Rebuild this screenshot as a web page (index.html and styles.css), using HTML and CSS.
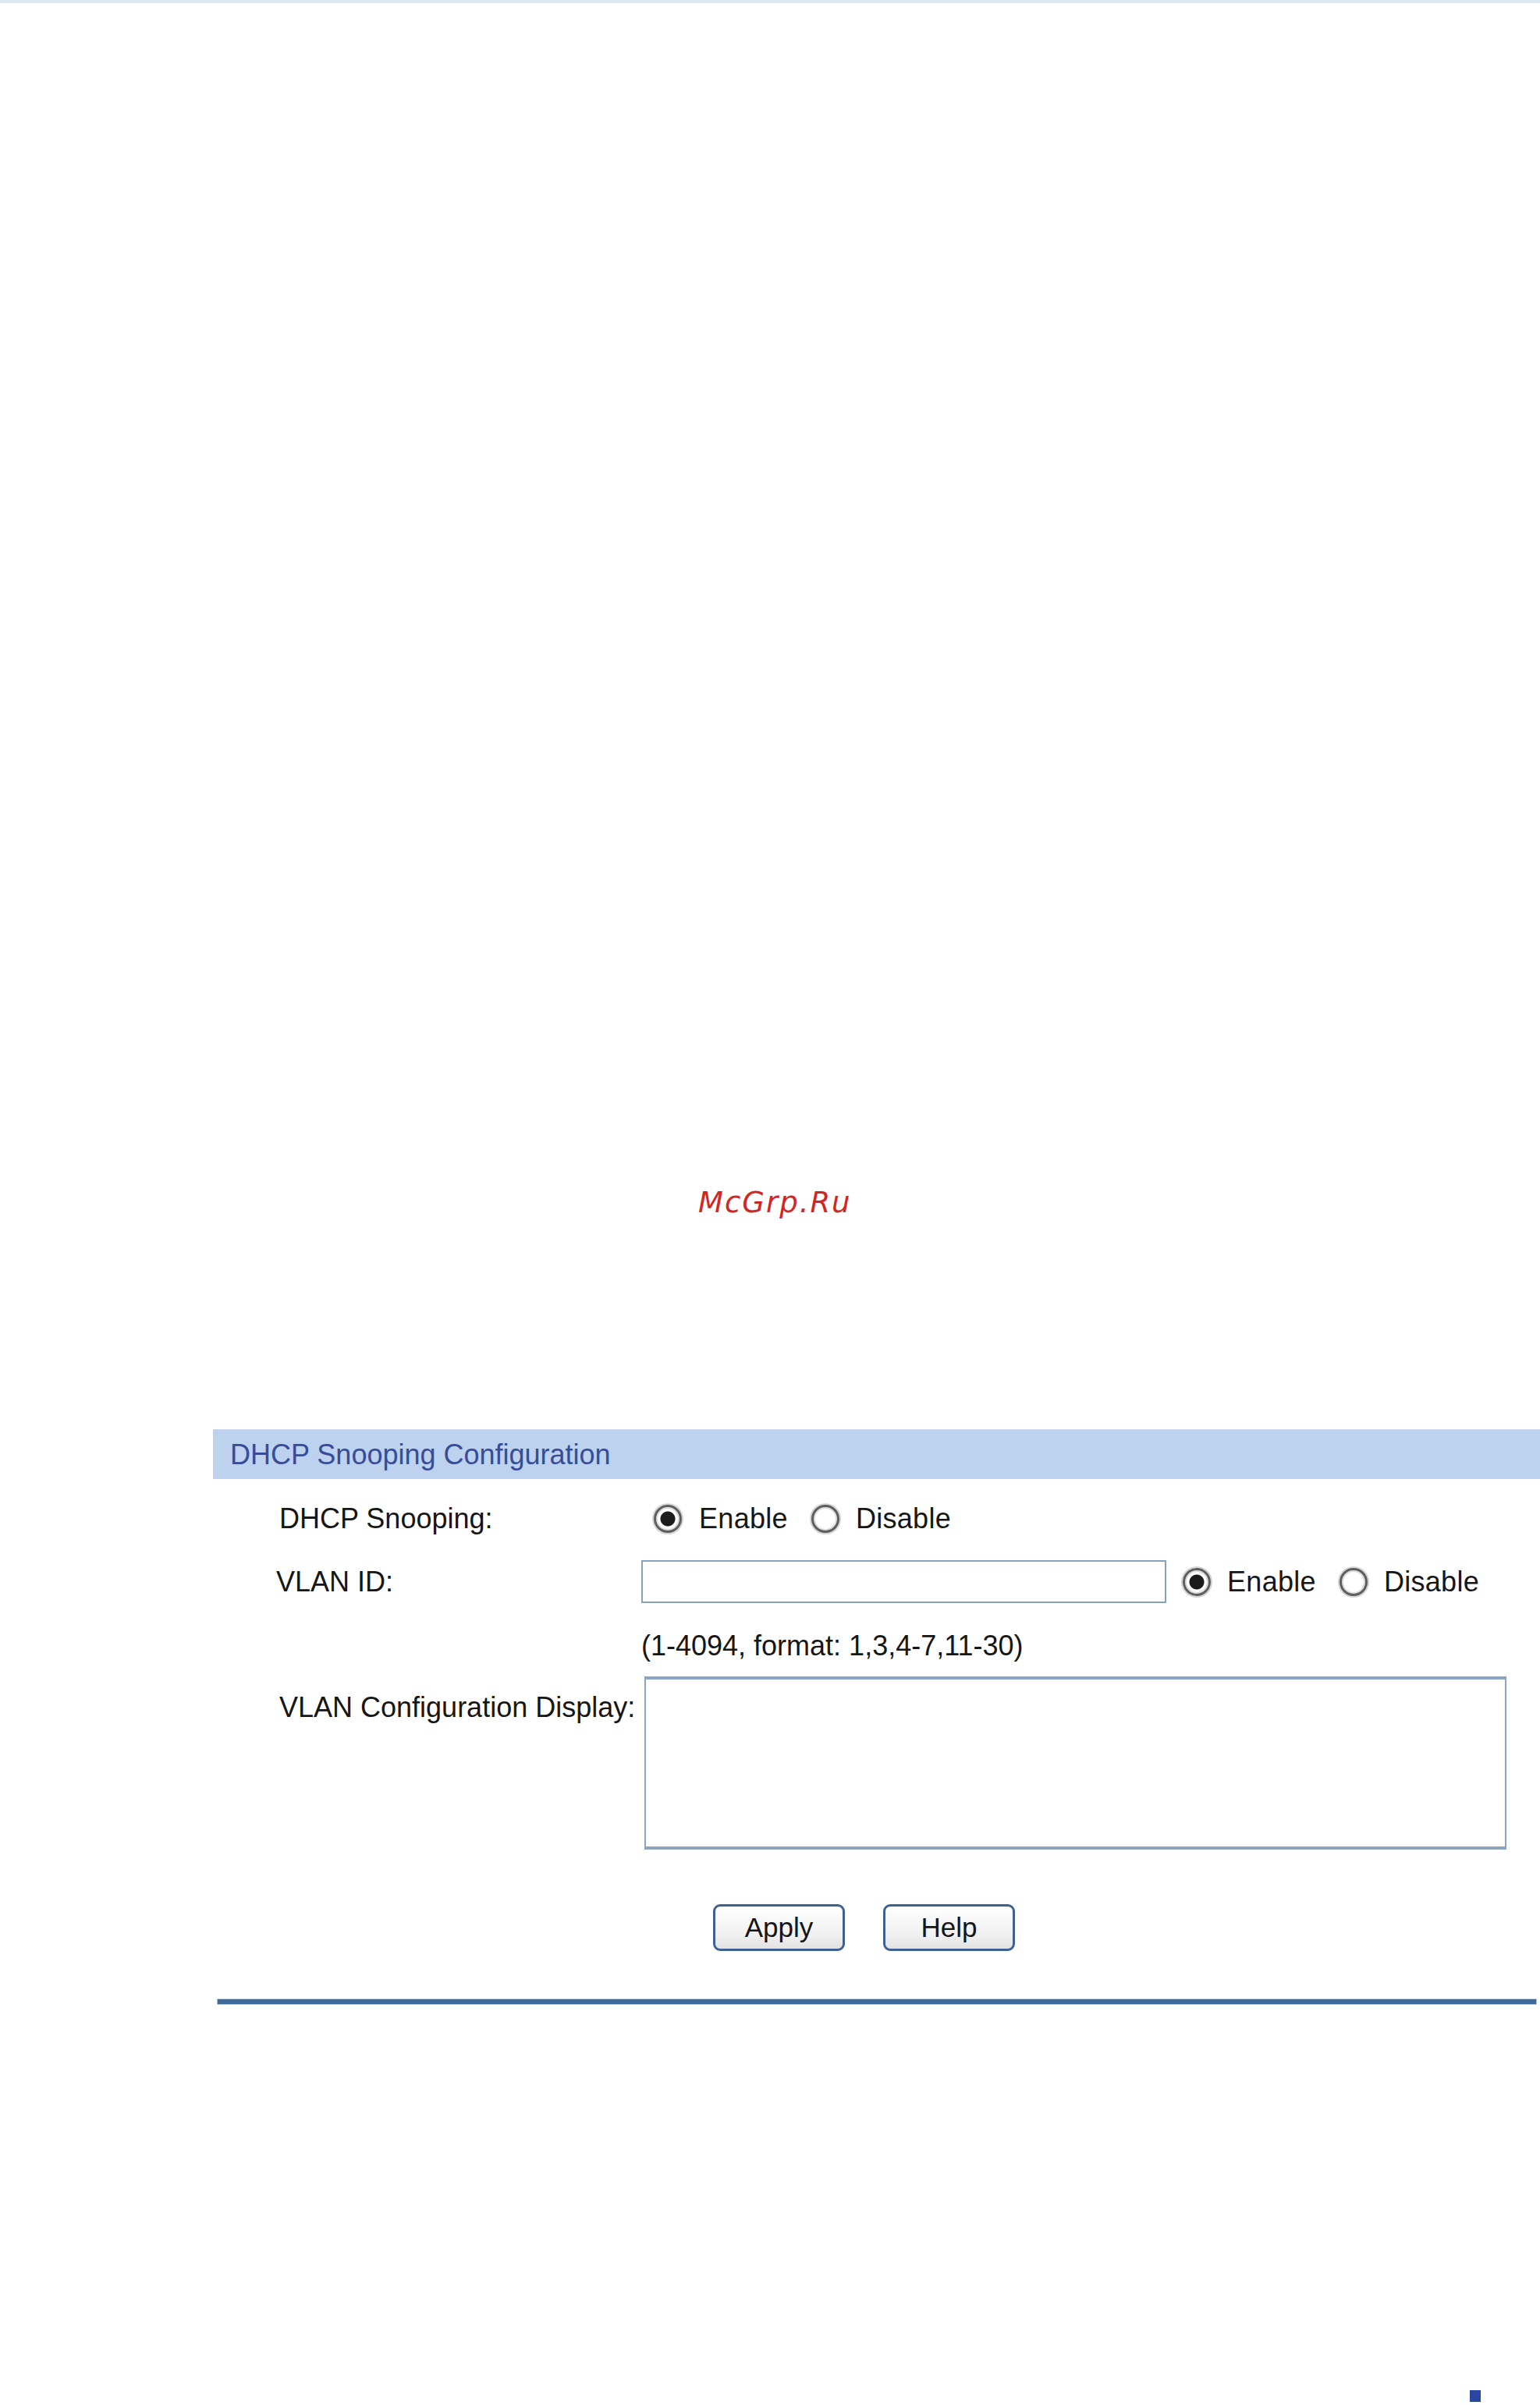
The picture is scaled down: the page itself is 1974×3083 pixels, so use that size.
FILE: index.html
```html
<!DOCTYPE html>
<html lang="en">
<head>
<meta charset="utf-8">
<title>DHCP Snooping Configuration</title>
<link rel="stylesheet" href="styles.css">
</head>
<body>
<div class="topbar"></div>
<div class="watermark">McGrp.Ru</div>
<section class="panel">
  <div class="panel-head">DHCP Snooping Configuration</div>
  <form class="form">
    <div class="row row-snoop">
      <label class="label">DHCP Snooping:</label>
      <div class="field radios radios-snoop">
        <input type="radio" name="snoop" class="radio" checked>
        <span class="opt">Enable</span>
        <input type="radio" name="snoop" class="radio">
        <span class="opt">Disable</span>
      </div>
    </div>
    <div class="row row-vlan">
      <label class="label label-vlan">VLAN ID:</label>
      <div class="field radios">
        <input type="text" class="text-input">
        <input type="radio" name="vlan" class="radio radio-vlan" checked>
        <span class="opt">Enable</span>
        <input type="radio" name="vlan" class="radio">
        <span class="opt">Disable</span>
      </div>
    </div>
    <div class="row row-hint">
      <span class="label"></span>
      <div class="field hint">(1-4094, format: 1,3,4-7,11-30)</div>
    </div>
    <div class="row row-display">
      <label class="label label-display">VLAN Configuration Display:</label>
      <div class="field"><textarea class="display-area"></textarea></div>
    </div>
    <div class="buttons">
      <button type="button" class="btn">Apply</button>
      <button type="button" class="btn">Help</button>
    </div>
  </form>
  <div class="rule"></div>
</section>
<div class="page-mark"></div>
</body>
</html>
```
FILE: styles.css
```css
html, body {
  margin: 0;
  padding: 0;
  background: #ffffff;
}
body {
  font-family: "Liberation Sans", Arial, sans-serif;
  font-size: 36px;
  color: #161616;
  width: 1974px;
  overflow-x: hidden;
}
.topbar {
  height: 4px;
  background: #dde8ee;
}
.watermark {
  margin-top: 1516px;
  margin-left: 895px;
  font-family: "DejaVu Sans", sans-serif;
  font-style: oblique;
  font-size: 37px;
  line-height: 44px;
  letter-spacing: 2px;
  color: #d42424;
}
.panel {
  margin-top: 268px;
  margin-left: 273px;
}
.panel-head {
  height: 64px;
  line-height: 64px;
  background: #bcd2ee;
  border-top: 1px solid #d0def2;
  box-sizing: border-box;
  padding-left: 22px;
  color: #384c9a;
}
.form {
  padding-top: 31px;
}
.row {
  display: grid;
  grid-template-columns: 464px 1fr;
  padding-left: 85px;
}
.label {
  line-height: 40px;
  white-space: nowrap;
}
.field {
  line-height: 40px;
}
.radios {
  display: flex;
  align-items: center;
}
.radios-snoop {
  padding-left: 16px;
  height: 40px;
}
.radio {
  appearance: none;
  -webkit-appearance: none;
  width: 36px;
  height: 36px;
  margin: 0 22px 0 0;
  border: 3px solid #5e5e5e;
  border-radius: 50%;
  box-sizing: border-box;
  background: #ffffff;
  box-shadow: 0 0 0 2px #d4d4d4, inset 0 0 0 2px #dcdcdc;
  flex: none;
}
.radio:checked {
  background: radial-gradient(circle, #1b1b1b 0 9px, #ffffff 10px);
}
.opt + .radio {
  margin-left: 30px;
  margin-right: 21px;
}
.opt {
  letter-spacing: 0.3px;
}
.row-vlan {
  margin-top: 33px;
  align-items: center;
}
.label-vlan {
  margin-left: -4px;
}
.text-input {
  width: 673px;
  height: 55px;
  box-sizing: border-box;
  border: 2px solid #86a2c2;
  margin: 0 21px 0 0;
  padding: 0;
  background: #ffffff;
  font: inherit;
}
.radio-vlan {
  margin-right: 21px;
}
.row-hint {
  margin-top: 35px;
}
.hint {
  white-space: nowrap;
}
.row-display {
  margin-top: 19px;
}
.label-display {
  padding-top: 20px;
}
.display-area {
  display: block;
  margin: 0 0 0 4px;
  width: 1105px;
  height: 222px;
  box-sizing: border-box;
  border: 2px solid #8aa4c2;
  border-top: 4px solid #8aa4c2;
  border-bottom: 4px solid #8aa4c2;
  padding: 0;
  resize: none;
  background: #ffffff;
}
.buttons {
  display: flex;
  gap: 49px;
  margin-top: 70px;
  padding-left: 641px;
}
.btn {
  width: 169px;
  height: 60px;
  border: 3px solid #3f6192;
  border-radius: 9px;
  background: linear-gradient(#ffffff, #f0f0f0 70%, #e2e2e2);
  font-family: "Liberation Sans", Arial, sans-serif;
  font-size: 35px;
  color: #161616;
  padding: 0;
  line-height: 52px;
}
.rule {
  margin: 62px 5px 0 6px;
  height: 6px;
  background: #3e6a9b;
  box-shadow: 0 0 0 1px #b4c6dc;
}
.page-mark {
  margin-top: 495px;
  margin-left: 1884px;
  width: 14px;
  height: 15px;
  background: #2a46a0;
}
```
